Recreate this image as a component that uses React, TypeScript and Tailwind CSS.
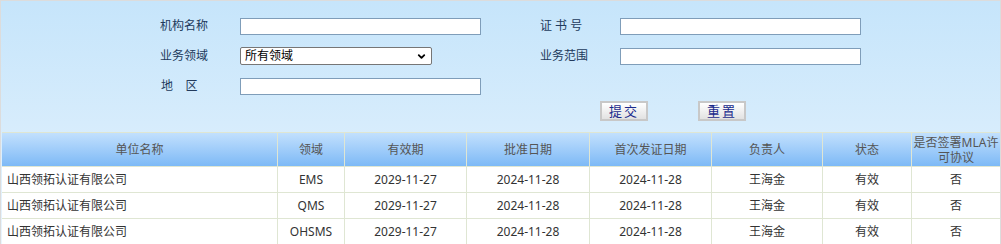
import { ChevronDown } from "lucide-react"

const rows = [
  { name: "山西领拓认证有限公司", field: "EMS" },
  { name: "山西领拓认证有限公司", field: "QMS" },
  { name: "山西领拓认证有限公司", field: "OHSMS" },
]

const headers = ["单位名称", "领域", "有效期", "批准日期", "首次发证日期", "负责人", "状态", "是否签署MLA许可协议"]
const widths = ["w-[276px]", "w-[67px]", "w-[122px]", "w-[123px]", "w-[122px]", "w-[111px]", "w-[89px]", "w-[89px]"]

function Label({ children }: { children: React.ReactNode }) {
  return <span className="w-[80px] text-[12px] text-[#223a5c]">{children}</span>
}

function TextInput() {
  return <input className="w-[241px] h-[17px] border border-[#7f9db9] bg-white outline-none" />
}

export default function App() {
  return (
    <div
      className="w-[1001px] h-[244px] overflow-hidden border-t border-l border-r border-[#dcdcdc] bg-gradient-to-b from-[#c6e5fb] via-[#d6ecfc] to-[#eaf5fe]"
      style={{ fontFamily: '"Noto Sans", "Noto Sans CJK SC", sans-serif' }}
    >
      {/* 查询表单 */}
      <div className="pt-[10px] pl-[159px]">
        <div className="flex items-center h-[30px]">
          <Label>机构名称</Label>
          <TextInput />
          <span className="ml-[59px] w-[80px] text-[12px] text-[#223a5c] whitespace-pre">证 书 号</span>
          <TextInput />
        </div>

        <div className="flex items-center h-[30px]">
          <Label>业务领域</Label>
          <div className="relative w-[192px] h-[18px] border border-[#767676] rounded-[2px] bg-white flex items-center pl-[4px] text-[12px] text-black">
            所有领域
            <ChevronDown className="absolute right-[4px] top-[3px] w-[11px] h-[11px]" strokeWidth={4} />
          </div>
          <span className="ml-[108px] w-[80px] text-[12px] text-[#223a5c]">业务范围</span>
          <TextInput />
        </div>

        <div className="flex items-center h-[30px]">
          <span className="w-[80px] text-[12px] text-[#223a5c] pl-[1px]">地&nbsp;&nbsp;&nbsp;&nbsp;区</span>
          <TextInput />
        </div>

        <div className="flex h-[20px] pl-[440px] gap-[50px]">
          <button className="w-[48px] h-[20px] border-2 border-[#c8c8c8] bg-gradient-to-b from-white to-[#e2e2e2] text-[13px] text-[#1a2a8c] tracking-[2px] leading-none">
            提交
          </button>
          <button className="w-[48px] h-[20px] border-2 border-[#c8c8c8] bg-gradient-to-b from-white to-[#e2e2e2] text-[13px] text-[#1a2a8c] tracking-[2px] leading-none">
            重置
          </button>
        </div>
      </div>

      {/* 结果列表 */}
      <div className="mt-[11px] ml-[1px] border-t border-[#dfe6d3]">
        <div className="flex h-[33px] bg-gradient-to-b from-[#c2e0fd] to-[#7db9f6]">
          {headers.map((h, i) => (
            <div
              key={h}
              className={`${widths[i]} shrink-0 flex items-center justify-center text-center text-[12px] leading-[15px] text-[#555] border-r border-[#dfe6d3]`}
            >
              {h}
            </div>
          ))}
        </div>

        {rows.map((r) => (
          <div key={r.field} className="flex h-[26px] bg-white border-t border-[#dfe6d3] text-[12px] text-[#333]">
            <div className={`${widths[0]} shrink-0 flex items-center pl-[5px] border-r border-[#dfe6d3]`}>{r.name}</div>
            <div className={`${widths[1]} shrink-0 flex items-center justify-center border-r border-[#dfe6d3]`}>{r.field}</div>
            <div className={`${widths[2]} shrink-0 flex items-center justify-center border-r border-[#dfe6d3]`}>2029-11-27</div>
            <div className={`${widths[3]} shrink-0 flex items-center justify-center border-r border-[#dfe6d3]`}>2024-11-28</div>
            <div className={`${widths[4]} shrink-0 flex items-center justify-center border-r border-[#dfe6d3]`}>2024-11-28</div>
            <div className={`${widths[5]} shrink-0 flex items-center justify-center border-r border-[#dfe6d3]`}>王海金</div>
            <div className={`${widths[6]} shrink-0 flex items-center justify-center border-r border-[#dfe6d3]`}>有效</div>
            <div className={`${widths[7]} shrink-0 flex items-center justify-center border-r border-[#dfe6d3]`}>否</div>
          </div>
        ))}
      </div>
    </div>
  )
}
